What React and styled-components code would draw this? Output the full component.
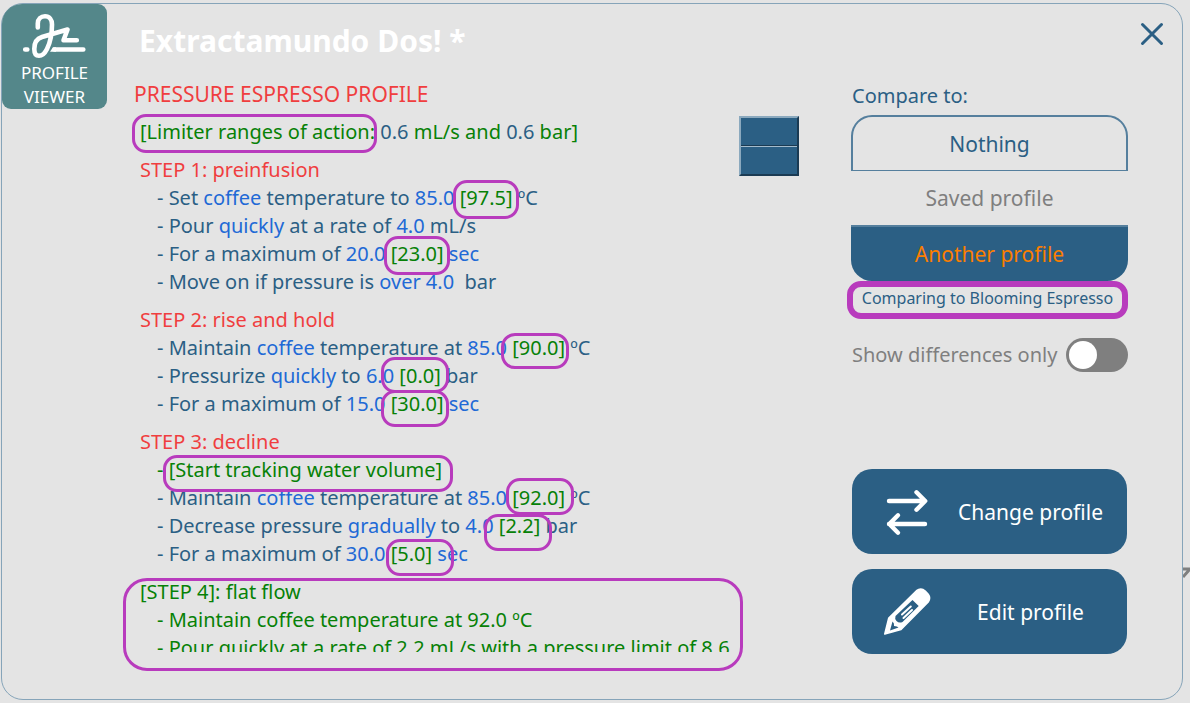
import React, { useState } from "react";
import styled, { createGlobalStyle, css } from "styled-components";

const color = {
  page: "#e4e4e4",
  blue: "#2b5f84",
  soft: "#557f9d",
  line: "#86a4b9",
  teal: "#54878a",
  red: "#f03e3f",
  green: "#078107",
  bright: "#2169d6",
  orange: "#fb7e00",
  grey: "#7f7f7f",
  ring: "#b83bbd",
};

const GlobalStyle = createGlobalStyle`
  *, *::before, *::after { box-sizing: border-box; }
  body {
    margin: 0;
    background: ${color.page};
    color: ${color.blue};
    font-family: "Noto Sans", sans-serif;
    font-size: 20px;
    line-height: 28px;
  }
  button, input { font: inherit; color: inherit; margin: 0; }
  h1, h2, h3, p, ul { margin: 0; padding: 0; font-weight: 400; }
`;

const Page = styled.div`
  position: relative;
  display: flex;
  height: 100vh;
  min-height: 600px;
  padding: 3px 7px 3px 1px;
  overflow: hidden;
`;

const Card = styled.main`
  flex: 1;
  min-width: 0;
  display: flex;
  align-items: stretch;
  border: 1px solid ${color.line};
  border-radius: 22px;
`;

const Behind = styled.svg`
  position: absolute;
  right: 0;
  top: 567px;
  width: 7px;
  height: 14px;
`;

const Badge = styled.div`
  flex: none;
  align-self: flex-start;
  width: 105px;
  height: 105px;
  padding-top: 4px;
  display: flex;
  flex-direction: column;
  align-items: center;
  background: ${color.teal};
  border-radius: 20px 9px 9px 9px;
  color: #fff;
  font-size: 17px;
  line-height: 24px;
  text-align: center;

  svg { width: 70px; height: 53px; flex: none; }
`;

const Content = styled.div`
  flex: 1;
  min-width: 0;
  display: flex;
  flex-direction: column;
  padding: 16px 52px 47px 27px;
`;

const Title = styled.h1`
  padding-left: 5px;
  color: #fff;
  font-size: 30px;
  font-weight: 700;
  line-height: 42px;
`;

const Kind = styled.h2`
  margin-top: 18px;
  color: ${color.red};
  font-size: 21px;
  line-height: 28px;
`;

const Viewer = styled.div`
  position: relative;
  flex: 1;
  min-height: 0;
  display: flex;
  gap: 4px;
  margin-top: 8px;
`;

const Script = styled.div`
  flex: 1;
  min-width: 0;
  padding: 2px 0 0 6px;
  overflow-y: auto;
  scrollbar-width: none;
`;

const Limits = styled.p`
  margin-bottom: 10px;
`;

const Step = styled.section`
  margin-bottom: 10px;
`;

const StepTitle = styled.h3`
  color: ${(p) => (p.$added ? color.green : color.red)};
  font-size: 20px;
`;

const Lines = styled.ul`
  list-style: none;
`;

const Line = styled.li`
  padding-left: 17px;
  white-space: pre-wrap;
  color: ${(p) => (p.$added ? color.green : color.blue)};
`;

const Value = styled.span`
  color: ${color.bright};
`;

const Diff = styled.ins`
  color: ${color.green};
  text-decoration: none;
`;

const Ring = styled.span`
  position: absolute;
  left: ${(p) => p.$x}px;
  top: ${(p) => p.$y}px;
  width: ${(p) => p.$w}px;
  height: ${(p) => p.$h}px;
  border: 3px solid ${color.ring};
  border-radius: ${(p) => p.$r || 14}px;
  pointer-events: none;
`;

const Scroller = styled.div`
  flex: none;
  align-self: flex-start;
  width: 60px;
  display: flex;
  flex-direction: column;
  border: 2px solid;
  border-color: #8ba9be #1b3b53 #1b3b53 #8ba9be;
`;

const ScrollButton = styled.button`
  height: 28px;
  padding: 0;
  border: 0;
  background: ${color.blue};

  &:first-child { border-bottom: 1px solid #1b3b53; }
  &:last-child { border-top: 1px solid #a5bccc; }
`;

const Side = styled.aside`
  flex: none;
  width: 277px;
  margin-right: 54px;
  padding: 0 0 45px;
  display: flex;
  flex-direction: column;
`;

const CloseRow = styled.div`
  display: flex;
  justify-content: flex-end;
  height: 78px;
  margin-right: -38px;
  padding-top: 16px;
`;

const Close = styled.button`
  width: 28px;
  height: 28px;
  padding: 0;
  border: 0;
  background: none;

  svg { display: block; }
`;

const Label = styled.p`
  padding-left: 1px;
`;

const Choices = styled.div`
  display: flex;
  flex-direction: column;
  margin-top: 5px;
`;

const Choice = styled.button`
  height: 54px;
  padding: 0;
  border: 0;
  background: none;
  color: ${color.grey};
  font-size: 21px;

  ${(p) => p.$kind === "outlined" && css`
    height: 56px;
    border: 2px solid ${color.soft};
    border-bottom-width: 1px;
    border-radius: 21px 21px 0 0;
    color: ${color.blue};
  `}
  ${(p) => p.$kind === "chosen" && css`
    height: 56px;
    background: ${color.blue};
    border-top: 2px solid ${color.soft};
    border-radius: 0 0 21px 21px;
    color: ${color.orange};
  `}
`;

const Comparing = styled.p`
  margin-left: -4px;
  height: 38px;
  border: 6px solid ${color.ring};
  border-radius: 14px;
  font-size: 16px;
  line-height: 22px;
  text-align: center;
  white-space: nowrap;
`;

const SwitchRow = styled.label`
  display: flex;
  align-items: center;
  justify-content: space-between;
  height: 34px;
  margin-top: 19px;
  padding-left: 1px;
  color: ${color.grey};
  white-space: nowrap;
`;

const Switch = styled.input`
  appearance: none;
  flex: none;
  width: 62px;
  height: 34px;
  padding: 3px;
  border-radius: 17px;
  background: ${color.grey};

  &::before {
    content: "";
    display: block;
    width: 28px;
    height: 28px;
    border-radius: 50%;
    background: #fff;
  }
  &:checked { background: ${color.blue}; }
  &:checked::before { margin-left: auto; }
`;

const Actions = styled.div`
  display: flex;
  flex-direction: column;
  gap: 15px;
  margin: auto 1px 0;
`;

const Action = styled.button`
  display: flex;
  align-items: center;
  height: 85px;
  padding: 0 24px 0 28px;
  border: 0;
  border-radius: 20px;
  background: ${color.blue};
  color: #fff;
  font-size: 21px;

  svg { flex: none; width: 54px; height: 54px; }
  span { flex: 1; margin-left: 24px; text-align: center; white-space: nowrap; }
`;

const rings = [
  { x: -2, y: -2, w: 245, h: 39 },
  { x: 319, y: 64, w: 66, h: 39 },
  { x: 250, y: 120, w: 66, h: 39 },
  { x: 367, y: 217, w: 68, h: 36 },
  { x: 247, y: 241, w: 68, h: 36 },
  { x: 247, y: 274, w: 68, h: 37 },
  { x: 29, y: 339, w: 290, h: 37 },
  { x: 372, y: 362, w: 68, h: 37 },
  { x: 350, y: 398, w: 68, h: 37 },
  { x: 252, y: 423, w: 68, h: 37 },
  { x: -11, y: 462, w: 620, h: 93, r: 24 },
];

const SignatureIcon = () => (
  <svg viewBox="20 8 70 53" fill="none" stroke="#fff" strokeWidth="4.600" strokeLinecap="round" strokeLinejoin="round" aria-hidden="true">
    <path d="M37.800 27.500V23.500C37.800 19 41 16.300 45 16.300C49.500 16.300 52 20 52 24.500C52 34 50.500 42 47 49C44.500 54 42 55.800 39 55.800C35.500 55.800 34.300 53 34.300 49C34.300 42 37 38.500 42 37L67.500 29.500L63.500 40.300H76.800" />
    <path d="M54.500 49.500H83.300M25.200 49.500H27.300" />
    <path d="M50 51.800L53 47.200H56V51.800Z" fill="#fff" stroke="none" />
  </svg>
);

const SwapIcon = () => (
  <svg viewBox="880 484 54 54" fill="none" stroke="#fff" strokeWidth="4.400" strokeLinecap="round" strokeLinejoin="round" aria-hidden="true">
    <path d="M889 500H925M916.500 491.300L925.200 500L916.500 508.700" />
    <path d="M925 523H889M898 514.300L889.300 523L898 531.700" />
  </svg>
);

const PencilIcon = () => (
  <svg viewBox="880 585 54 54" aria-hidden="true">
    <path fill="#fff" stroke="#fff" strokeWidth="1.600" strokeLinejoin="round" d="M884.800 634L888.800 618L916.500 590.700Q921 587.300 925.200 591L928.200 594.200Q931 598 928.200 602L901 629.500Z" />
    <path fill="#2b5f84" d="M912.500 600L918.700 606L902.500 622Q899 623.500 896.500 621Q894.500 618.500 895.500 616Z M892.500 621.500L890 630.500L898.500 627.500Q897.500 626 894 626Q894.500 623 892.500 621.500Z" />
    <path stroke="#fff" strokeWidth="2" strokeLinecap="round" fill="none" d="M902 614.500L910.800 606.500M903.500 618L912 610" />
  </svg>
);

export default function App() {
  const [onlyDiffs, setOnlyDiffs] = useState(false);
  return (
    <>
      <GlobalStyle />
      <Page>
        <Card>
          <Badge>
            <SignatureIcon />
            <span>PROFILE<br />VIEWER</span>
          </Badge>

          <Content>
            <Title>Extractamundo Dos! *</Title>
            <Kind>PRESSURE ESPRESSO PROFILE</Kind>
            <Viewer>
              <Script>
                <Limits>
                  <Diff>[Limiter ranges of action:</Diff> 0.6 <Diff>mL/s and</Diff> 0.6 <Diff>bar]</Diff>
                </Limits>
                <Step>
                  <StepTitle>STEP 1: preinfusion</StepTitle>
                  <Lines>
                    <Line>- Set <Value>coffee</Value> temperature to <Value>85.0</Value> <Diff>[97.5]</Diff> ºC</Line>
                    <Line>- Pour <Value>quickly</Value> at a rate of <Value>4.0</Value> mL/s</Line>
                    <Line>- For a maximum of <Value>20.0</Value> <Diff>[23.0]</Diff> <Value>sec</Value></Line>
                    <Line>- Move on if pressure is <Value>over 4.0</Value>{"  "}bar</Line>
                  </Lines>
                </Step>
                <Step>
                  <StepTitle>STEP 2: rise and hold</StepTitle>
                  <Lines>
                    <Line>- Maintain <Value>coffee</Value> temperature at <Value>85.0</Value> <Diff>[90.0]</Diff> ºC</Line>
                    <Line>- Pressurize <Value>quickly</Value> to <Value>6.0</Value> <Diff>[0.0]</Diff> bar</Line>
                    <Line>- For a maximum of <Value>15.0</Value> <Diff>[30.0]</Diff> <Value>sec</Value></Line>
                  </Lines>
                </Step>
                <Step>
                  <StepTitle>STEP 3: decline</StepTitle>
                  <Lines>
                    <Line $added>- [Start tracking water volume]</Line>
                    <Line>- Maintain <Value>coffee</Value> temperature at <Value>85.0</Value> <Diff>[92.0]</Diff> ºC</Line>
                    <Line>- Decrease pressure <Value>gradually</Value> to <Value>4.0</Value> <Diff>[2.2]</Diff> bar</Line>
                    <Line>- For a maximum of <Value>30.0</Value> <Diff>[5.0]</Diff> <Value>sec</Value></Line>
                  </Lines>
                </Step>
                <Step>
                  <StepTitle $added>[STEP 4]: flat flow</StepTitle>
                  <Lines>
                    <Line $added>- Maintain coffee temperature at 92.0 ºC</Line>
                    <Line $added>- Pour quickly at a rate of 2.2 mL/s with a pressure limit of 8.6</Line>
                  </Lines>
                </Step>
              </Script>
              <Scroller>
                <ScrollButton aria-label="Scroll up" />
                <ScrollButton aria-label="Scroll down" />
              </Scroller>
              {rings.map((r) => (
                <Ring key={`${r.x}-${r.y}`} $x={r.x} $y={r.y} $w={r.w} $h={r.h} $r={r.r} />
              ))}
            </Viewer>
          </Content>

          <Side>
            <CloseRow>
              <Close aria-label="Close">
                <svg width="28" height="28" viewBox="0 0 28 28" fill="none" stroke={color.blue} strokeWidth="3" strokeLinecap="round">
                  <path d="M4.500 4.500L23.500 23.500M23.500 4.500L4.500 23.500" />
                </svg>
              </Close>
            </CloseRow>
            <Label id="compare-label">Compare to:</Label>
            <Choices role="group" aria-labelledby="compare-label">
              <Choice $kind="outlined">Nothing</Choice>
              <Choice>Saved profile</Choice>
              <Choice $kind="chosen" aria-pressed="true">Another profile</Choice>
            </Choices>
            <Comparing>Comparing to Blooming Espresso</Comparing>
            <SwitchRow>
              Show differences only
              <Switch type="checkbox" role="switch" checked={onlyDiffs} onChange={(e) => setOnlyDiffs(e.target.checked)} />
            </SwitchRow>
            <Actions>
              <Action><SwapIcon /><span>Change profile</span></Action>
              <Action><PencilIcon /><span>Edit profile</span></Action>
            </Actions>
          </Side>
        </Card>
        <Behind viewBox="0 0 7 14" fill="none" stroke="#7f7f7f" strokeWidth="3" aria-hidden="true">
          <path d="M0 2H7M7 2L0 10" />
        </Behind>
      </Page>
    </>
  );
}
